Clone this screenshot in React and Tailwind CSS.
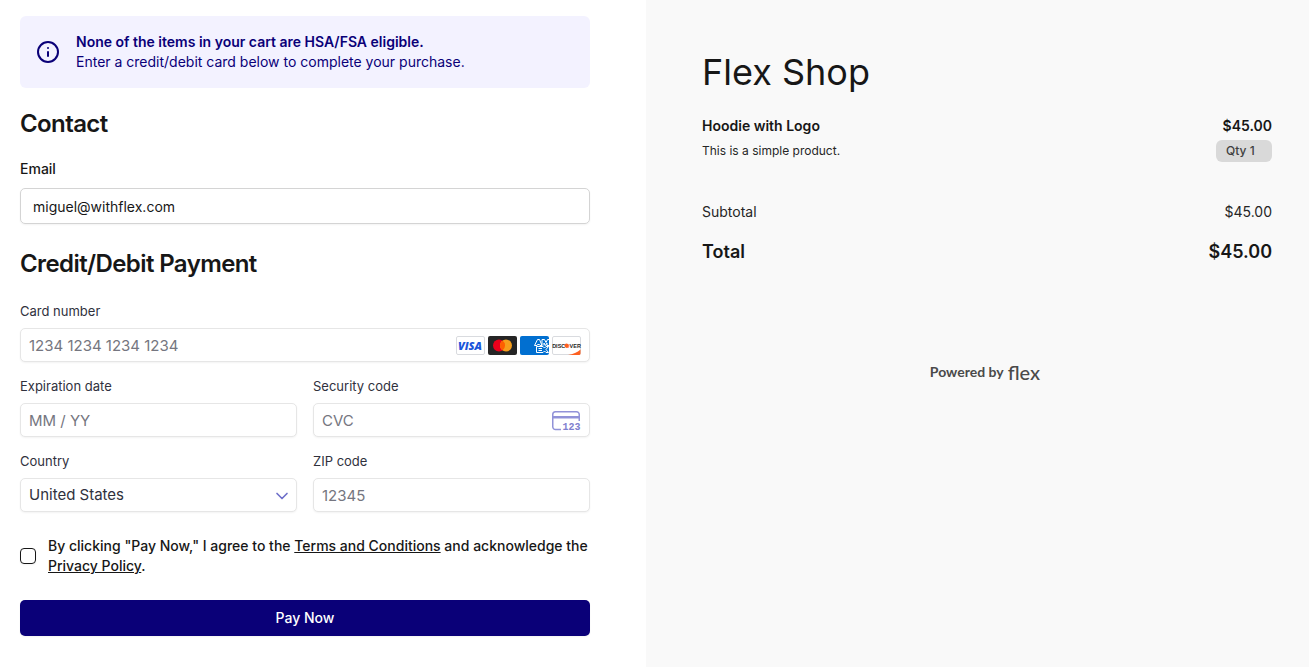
import { useState } from "react";
import { ChevronDown, Info } from "lucide-react";

const order = {
    shop: "Flex Shop",
    items: [
        {
            name: "Hoodie with Logo",
            description: "This is a simple product.",
            price: "$45.00",
            quantity: 1,
        },
    ],
    subtotal: "$45.00",
    total: "$45.00",
};

const paymentInput =
    "block h-[34px] w-full rounded-[5px] border border-[#e6e6e6] bg-white px-2 text-[15px] text-[#30313d] shadow-[0_1px_2px_rgba(0,0,0,0.05)] placeholder:text-[#757680] outline-none focus:border-[#0a0078]";

function CardBrands() {
    return (
        <div className="pointer-events-none absolute inset-y-0 right-2 flex items-center gap-[2px]">
            {/* Visa */}
            <svg width="30" height="20" viewBox="0 -1 30 20" aria-label="Visa">
                <rect x="0.5" y="0.5" width="28" height="18" rx="1.5" fill="#fff" stroke="#d9dbdf" />
                <text x="14" y="13.5" textAnchor="middle" fontFamily="Open Sans, sans-serif" fontSize="11" fontWeight="800" fontStyle="italic" fill="#1a56db">VISA</text>
            </svg>
            {/* Mastercard */}
            <svg width="30" height="20" viewBox="0 -1 30 20" aria-label="Mastercard">
                <rect width="29" height="19" rx="2" fill="#252525" />
                <circle cx="11" cy="9.5" r="6" fill="#eb001b" />
                <circle cx="18" cy="9.5" r="6" fill="#f79e1b" />
                <path d="M14.5 4.6a6 6 0 0 1 0 9.8a6 6 0 0 1 0-9.8z" fill="#ff5f00" />
            </svg>
            {/* American Express */}
            <svg width="30" height="20" viewBox="0 -1 30 20" aria-label="American Express">
                <rect width="29" height="19" rx="2" fill="#016fd0" />
                <g fill="none" stroke="#fff" strokeWidth="1">
                    <path d="M14.5 9.5l3-6h2l2.500 6h-2l-.5-1h-2l-.5 1zM22 9.500v-6h2.500l1.500 3 1.500-3H29M24 9.500V7l1.500 2.500L27 7v2.500h2" />
                    <path d="M16.500 10.500h6.500l1.500 1.500 1.500-1.500h2.500l-2.500 3 2.500 3H26l-1.500-1.500-1.500 1.500h-6.500zM22 12.500h-3.500M22 14.500h-3.500" />
                </g>
            </svg>
            {/* Discover */}
            <svg width="30" height="20" viewBox="0 -1 30 20" aria-label="Discover">
                <rect x="0.5" y="0.5" width="28" height="18" rx="1.5" fill="#fff" stroke="#d9dbdf" />
                <path d="M28.5 13.5v4a1.5 1.5 0 0 1-1.500 1.500H16C21 18 25.5 16.5 28.5 13.5z" fill="#fd6020" />
                <text x="14.5" y="11.5" textAnchor="middle" fontFamily="Liberation Sans, sans-serif" fontSize="5.5" fontWeight="700" fill="#1f1f1f">
                    DISC<tspan fill="#fd6020">O</tspan>VER
                </text>
                <circle cx="14.5" cy="9.5" r="2" fill="#fd6020" />
            </svg>
        </div>
    );
}

function CvcIcon() {
    return (
        <svg
            className="pointer-events-none absolute right-[9px] top-[7px]"
            width="30"
            height="22"
            viewBox="0 0 30 22"
            aria-hidden="true"
        >
            <path
                d="M10 19.5H4.5A2.75 2.75 0 0 1 1.75 16.75V4.5A2.75 2.75 0 0 1 4.5 1.75H25.5A2.75 2.75 0 0 1 28.25 4.5V11"
                fill="none"
                stroke="#9192d8"
                strokeWidth="1.5"
            />
            <path d="M2 6h26v2.5H2z" fill="#9192d8" />
            <text x="11.5" y="20" fontFamily="Liberation Mono, monospace" fontSize="10" fontWeight="700" fill="#7f80cf">
                123
            </text>
        </svg>
    );
}

function Field({ id, label, children }) {
    return (
        <div>
            <label htmlFor={id} className="mb-[7px] block text-[13px] leading-5 text-[#30313d]">
                {label}
            </label>
            <div className="relative">{children}</div>
        </div>
    );
}

function CheckoutForm() {
    const [email, setEmail] = useState("miguel@withflex.com");
    const [agreed, setAgreed] = useState(false);

    return (
        <form className="text-sm" onSubmit={(e) => e.preventDefault()}>
            <div className="flex items-center gap-4 rounded-md bg-[#f3f2ff] p-4 text-[#0a0078]">
                <Info className="size-6 shrink-0" />
                <div className="leading-5">
                    <p className="font-semibold">None of the items in your cart are HSA/FSA eligible.</p>
                    <p>Enter a credit/debit card below to complete your purchase.</p>
                </div>
            </div>

            <h2 className="mt-5 text-2xl font-semibold tracking-tight">Contact</h2>
            <label htmlFor="email" className="mt-[19px] block font-medium leading-5">
                Email
            </label>
            <input
                id="email"
                type="email"
                value={email}
                onChange={(e) => setEmail(e.target.value)}
                className="mt-[9px] block h-9 w-full rounded-[5px] border border-[#d4d4d4] px-3 text-sm shadow-xs outline-none focus:border-[#0a0078]"
            />

            <h2 className="mt-6 text-2xl font-semibold tracking-tight">Credit/Debit Payment</h2>
            <div className="mt-[21px] grid grid-cols-2 gap-x-4 gap-y-[14px]">
                <div className="col-span-2">
                    <Field id="card" label="Card number">
                        <input id="card" placeholder="1234 1234 1234 1234" className={paymentInput} />
                        <CardBrands />
                    </Field>
                </div>
                <Field id="expiry" label="Expiration date">
                    <input id="expiry" placeholder="MM / YY" className={paymentInput} />
                </Field>
                <Field id="cvc" label="Security code">
                    <input id="cvc" placeholder="CVC" className={paymentInput} />
                    <CvcIcon />
                </Field>
                <Field id="country" label="Country">
                    <select id="country" className={`${paymentInput} appearance-none`}>
                        <option>United States</option>
                    </select>
                    <ChevronDown className="pointer-events-none absolute right-[5px] top-[8px] size-5 text-[#6e6fc9]" strokeWidth={2} />
                </Field>
                <Field id="zip" label="ZIP code">
                    <input id="zip" placeholder="12345" className={paymentInput} />
                </Field>
            </div>

            <div className="mt-6 flex items-center gap-3">
                <input
                    id="terms"
                    type="checkbox"
                    checked={agreed}
                    onChange={(e) => setAgreed(e.target.checked)}
                    className="size-4 shrink-0 appearance-none rounded-sm border border-[#171717] shadow-xs checked:bg-[#0a0078]"
                />
                <label htmlFor="terms" className="font-medium leading-5">
                    By clicking "Pay Now," I agree to the{" "}
                    <a href="#terms" className="underline">Terms and Conditions</a> and acknowledge the{" "}
                    <a href="#privacy" className="underline">Privacy Policy</a>.
                </label>
            </div>

            <button
                type="submit"
                className="mt-6 h-9 w-full rounded-[5px] bg-[#0a0078] font-medium text-white shadow-xs hover:bg-[#0a0078]/90"
            >
                Pay Now
            </button>
        </form>
    );
}

function OrderSummary() {
    return (
        <div>
            <h1 className="text-4xl">{order.shop}</h1>
            {order.items.map((item) => (
                <div key={item.name} className="mt-6 flex justify-between">
                    <div>
                        <p className="text-sm font-semibold">{item.name}</p>
                        <p className="mt-1 text-xs leading-[22px] text-[#262626]">{item.description}</p>
                    </div>
                    <div className="flex flex-col items-end">
                        <p className="text-sm font-semibold">{item.price}</p>
                        <span className="mt-1 flex h-[22px] w-14 items-center rounded-md bg-[#d9d9d9] pl-[10px] text-xs font-medium text-[#404040]">
                            Qty {item.quantity}
                        </span>
                    </div>
                </div>
            ))}
            <div className="mt-10 flex justify-between text-sm text-[#262626]">
                <span>Subtotal</span>
                <span>{order.subtotal}</span>
            </div>
            <div className="mt-4 flex justify-between text-lg font-semibold">
                <span>Total</span>
                <span>{order.total}</span>
            </div>
            <p className="mt-[92px] flex items-center justify-center gap-1 pr-1 font-[Lato,sans-serif] text-sm font-bold text-[#4a4a4a]">
                Powered by <span className="text-xl leading-7 font-medium">flex</span>
            </p>
        </div>
    );
}

export default function App() {
    return (
        <main className="flex min-h-screen bg-white font-[Inter,sans-serif] text-[#171717]">
            <section className="flex-1 py-4 pl-5 pr-14">
                <CheckoutForm />
            </section>
            <aside className="flex-1 bg-[#f9f9f9] pl-14 pr-[37px] pt-[52px]">
                <OrderSummary />
            </aside>
        </main>
    );
}
